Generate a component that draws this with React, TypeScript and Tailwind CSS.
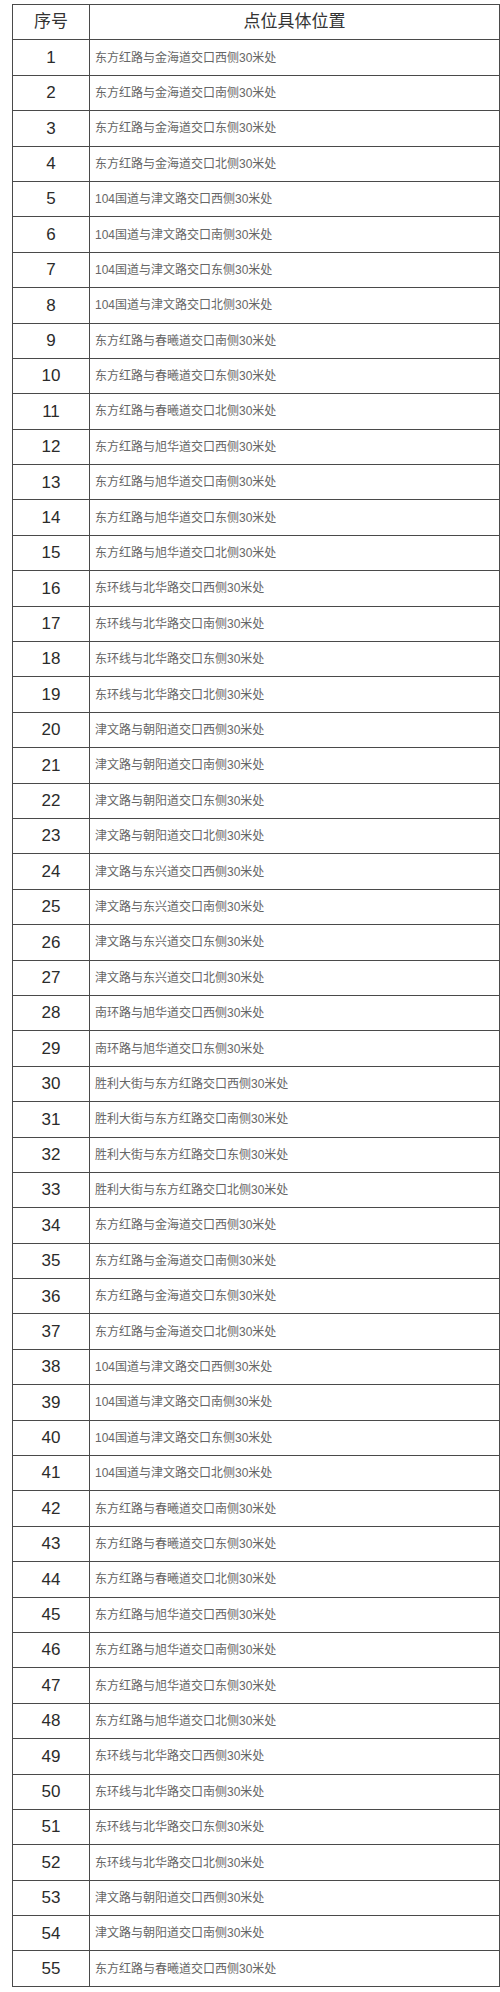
const places: string[] = [
  '东方红路与金海道交口西侧30米处',
  '东方红路与金海道交口南侧30米处',
  '东方红路与金海道交口东侧30米处',
  '东方红路与金海道交口北侧30米处',
  '104国道与津文路交口西侧30米处',
  '104国道与津文路交口南侧30米处',
  '104国道与津文路交口东侧30米处',
  '104国道与津文路交口北侧30米处',
  '东方红路与春曦道交口南侧30米处',
  '东方红路与春曦道交口东侧30米处',
  '东方红路与春曦道交口北侧30米处',
  '东方红路与旭华道交口西侧30米处',
  '东方红路与旭华道交口南侧30米处',
  '东方红路与旭华道交口东侧30米处',
  '东方红路与旭华道交口北侧30米处',
  '东环线与北华路交口西侧30米处',
  '东环线与北华路交口南侧30米处',
  '东环线与北华路交口东侧30米处',
  '东环线与北华路交口北侧30米处',
  '津文路与朝阳道交口西侧30米处',
  '津文路与朝阳道交口南侧30米处',
  '津文路与朝阳道交口东侧30米处',
  '津文路与朝阳道交口北侧30米处',
  '津文路与东兴道交口西侧30米处',
  '津文路与东兴道交口南侧30米处',
  '津文路与东兴道交口东侧30米处',
  '津文路与东兴道交口北侧30米处',
  '南环路与旭华道交口西侧30米处',
  '南环路与旭华道交口东侧30米处',
  '胜利大街与东方红路交口西侧30米处',
  '胜利大街与东方红路交口南侧30米处',
  '胜利大街与东方红路交口东侧30米处',
  '胜利大街与东方红路交口北侧30米处',
  '东方红路与金海道交口西侧30米处',
  '东方红路与金海道交口南侧30米处',
  '东方红路与金海道交口东侧30米处',
  '东方红路与金海道交口北侧30米处',
  '104国道与津文路交口西侧30米处',
  '104国道与津文路交口南侧30米处',
  '104国道与津文路交口东侧30米处',
  '104国道与津文路交口北侧30米处',
  '东方红路与春曦道交口南侧30米处',
  '东方红路与春曦道交口东侧30米处',
  '东方红路与春曦道交口北侧30米处',
  '东方红路与旭华道交口西侧30米处',
  '东方红路与旭华道交口南侧30米处',
  '东方红路与旭华道交口东侧30米处',
  '东方红路与旭华道交口北侧30米处',
  '东环线与北华路交口西侧30米处',
  '东环线与北华路交口南侧30米处',
  '东环线与北华路交口东侧30米处',
  '东环线与北华路交口北侧30米处',
  '津文路与朝阳道交口西侧30米处',
  '津文路与朝阳道交口南侧30米处',
  '东方红路与春曦道交口西侧30米处',
];

export default function App() {
  return (
    <div className="min-h-[1992px] w-[500px] overflow-hidden bg-white pt-[4px] pl-[12px] font-['Liberation_Sans','Noto_Sans_CJK_SC',sans-serif]">
      <div className="w-[488px] border border-[#4a4a4a]">
        {/* header */}
        <div className="flex h-[35.4px] border-b border-[#4a4a4a] text-[17px] text-[#333]">
          <div className="flex w-[77px] shrink-0 items-center justify-center border-r border-[#4a4a4a]">序号</div>
          <div className="flex flex-1 items-center justify-center">点位具体位置</div>
        </div>
        {places.map((p, i) => (
          <div
            key={i}
            className={`flex ${i < places.length - 1 ? 'h-[35.4px] border-b border-[#4a4a4a]' : 'h-[34.4px]'}`}
          >
            <div className="flex w-[77px] shrink-0 items-center justify-center border-r border-[#4a4a4a] text-[17px] text-[#2b2b2b]">
              {i + 1}
            </div>
            <div className="flex flex-1 items-center pl-[5px] text-[12px] text-[#666]">{p}</div>
          </div>
        ))}
      </div>
    </div>
  );
}
